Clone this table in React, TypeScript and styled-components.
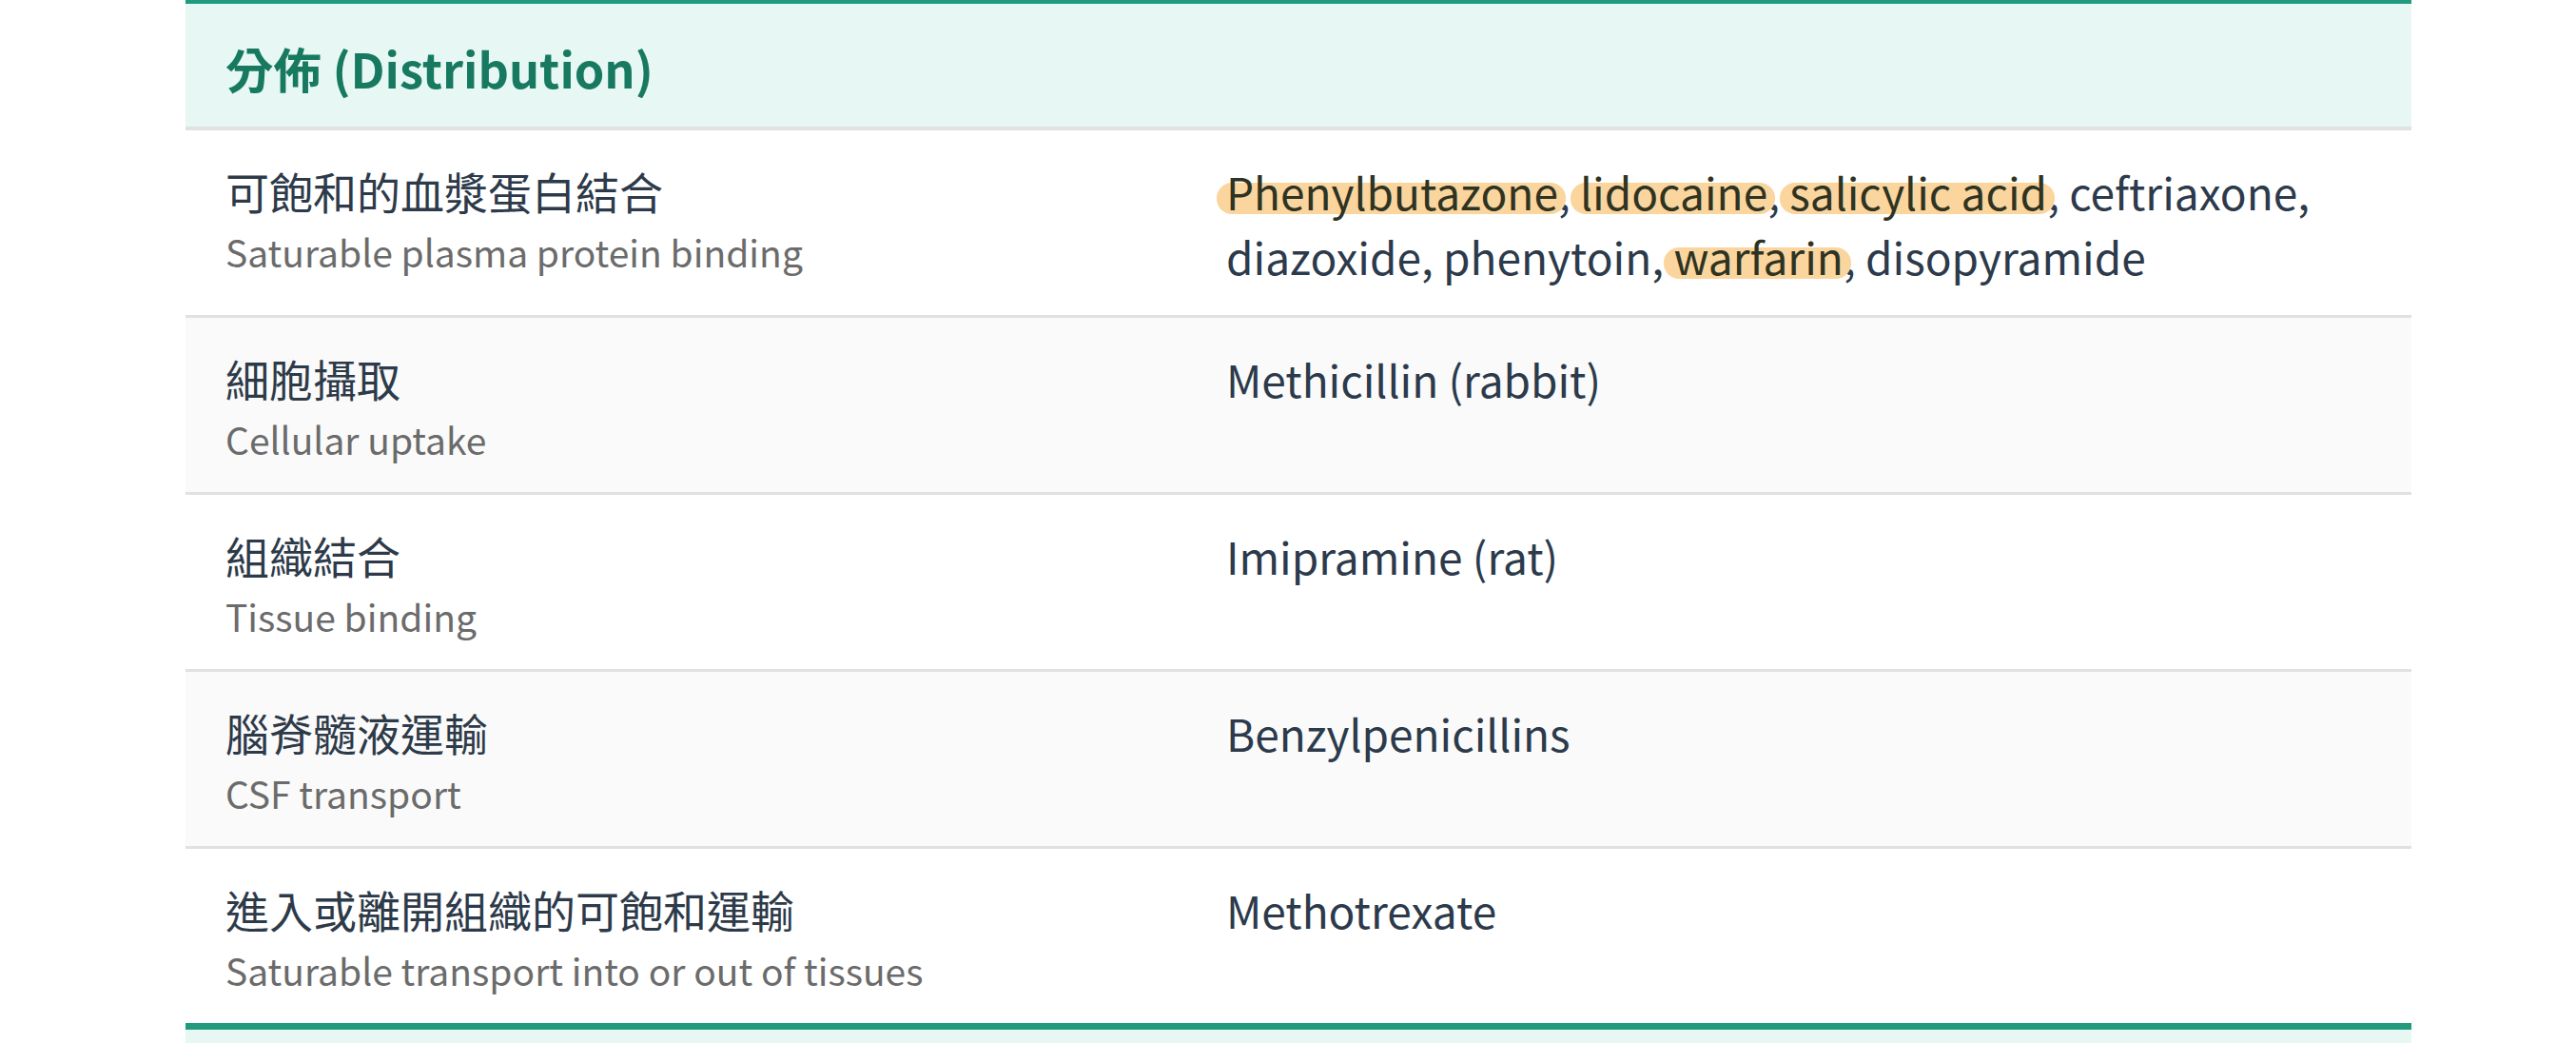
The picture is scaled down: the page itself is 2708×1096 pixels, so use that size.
import React from "react";
import styled, { createGlobalStyle } from "styled-components";

const GlobalStyle = createGlobalStyle`
  html, body {
    margin: 0;
    padding: 0;
    background: #fff;
  }
  body {
    font-family: "Noto Sans CJK TC", "Noto Sans", sans-serif;
  }
`;

const Page = styled.div`
  padding: 0 173px 0 195px;
`;

const Table = styled.section`
  width: 2340px;
  border-top: 4px solid #219a7d;
  border-bottom: 3px solid #219a7d;
`;

const Header = styled.div`
  background: #e7f7f4;
  border-bottom: 4px solid #e1e1e1;
  padding: 31px 42px 26px;
  min-height: 72px;
`;

const HeaderTitle = styled.h2`
  margin: 0;
  font-size: 50.5px;
  line-height: 72px;
  font-weight: 700;
  color: #177a60;
`;

const Row = styled.div<{ $striped: boolean; $last: boolean }>`
  display: grid;
  grid-template-columns: 1052px 1fr;
  background: ${(p) => (p.$striped ? "#fafafa" : "#fff")};
  border-bottom: ${(p) => (p.$last ? "none" : "3px solid #e1e1e1")};
`;

const Cell = styled.div`
  padding: 30px 42px 28px;
`;

const Title = styled.div`
  font-size: 46px;
  line-height: 66px;
  color: #2d3a49;
`;

const Subtitle = styled.div`
  margin-top: 3px;
  font-size: 39px;
  line-height: 56px;
  color: #6b6b6b;
`;

const Drugs = styled.div`
  font-size: 46px;
  line-height: 68px;
  color: #2c3a4b;
`;

const Mark = styled.span`
  position: relative;
  z-index: 0;
  color: #2e3322;

  &::before {
    content: "";
    position: absolute;
    left: -10px;
    right: -8px;
    top: 0.52em;
    bottom: 0.2em;
    border-radius: 16px;
    background: #fbd59e;
    z-index: -1;
  }
`;

const NextSection = styled.div`
  width: 2340px;
  border-top: 4px solid #219a7d;
  background: #e7f7f4;
  height: 131px;
`;

type Drug = { name: string; hl?: boolean };
type Item = { zh: string; en: string; drugs: Drug[] };

const rows: Item[] = [
  {
    zh: "可飽和的血漿蛋白結合",
    en: "Saturable plasma protein binding",
    drugs: [
      { name: "Phenylbutazone", hl: true },
      { name: "lidocaine", hl: true },
      { name: "salicylic acid", hl: true },
      { name: "ceftriaxone" },
      { name: "diazoxide" },
      { name: "phenytoin" },
      { name: "warfarin", hl: true },
      { name: "disopyramide" },
    ],
  },
  { zh: "細胞攝取", en: "Cellular uptake", drugs: [{ name: "Methicillin (rabbit)" }] },
  { zh: "組織結合", en: "Tissue binding", drugs: [{ name: "Imipramine (rat)" }] },
  { zh: "腦脊髓液運輸", en: "CSF transport", drugs: [{ name: "Benzylpenicillins" }] },
  {
    zh: "進入或離開組織的可飽和運輸",
    en: "Saturable transport into or out of tissues",
    drugs: [{ name: "Methotrexate" }],
  },
];

function DrugList({ drugs }: { drugs: Drug[] }) {
  return (
    <Drugs>
      {drugs.map((d, i) => (
        <React.Fragment key={d.name}>
          {d.hl ? <Mark>{d.name}</Mark> : d.name}
          {i < drugs.length - 1 ? ", " : ""}
        </React.Fragment>
      ))}
    </Drugs>
  );
}

export default function App() {
  return (
    <Page>
      <GlobalStyle />
      <Table>
        <Header>
          <HeaderTitle>分佈 (Distribution)</HeaderTitle>
        </Header>
        {rows.map((r, i) => (
          <Row key={r.zh} $striped={i % 2 === 1} $last={i === rows.length - 1}>
            <Cell>
              <Title>{r.zh}</Title>
              <Subtitle>{r.en}</Subtitle>
            </Cell>
            <Cell>
              <DrugList drugs={r.drugs} />
            </Cell>
          </Row>
        ))}
      </Table>
      <NextSection />
    </Page>
  );
}
